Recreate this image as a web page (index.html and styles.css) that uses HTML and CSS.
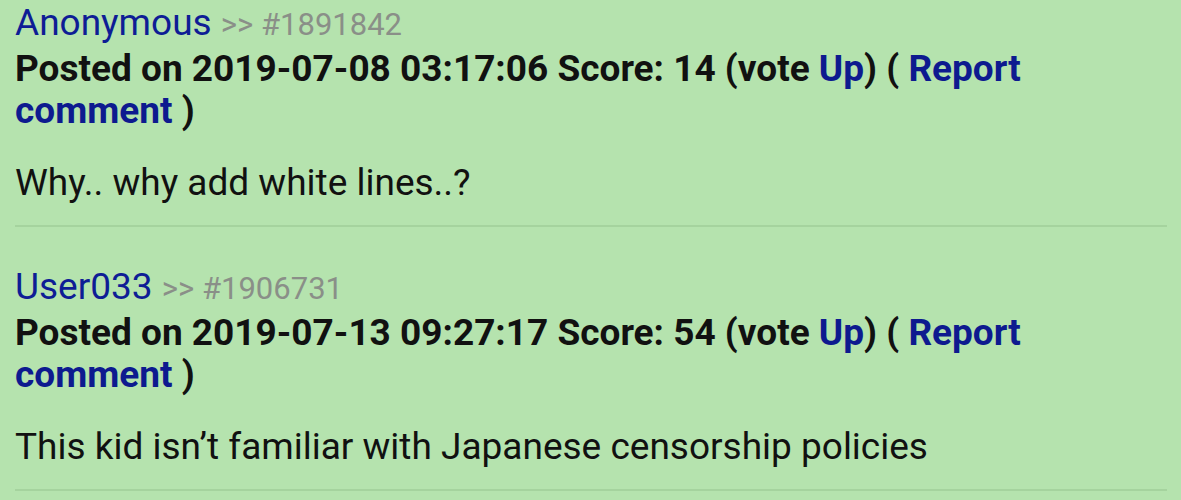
FILE: index.html
```html
<!DOCTYPE html>
<html>
<head>
  <title>Comments</title>
  <meta charset="utf-8">
  <meta name="viewport" content="width=device-width, initial-scale=1.0">
  <link rel="stylesheet" href="styles.css">
</head>
<body>
  <div class="comments">
    <div class="comment">
      <div class="comment-head">
        <a class="author" href="#">Anonymous</a>
        <span class="ref">&gt;&gt; #1891842</span>
      </div>
      <div class="meta">
        Posted on 2019-07-08 03:17:06 Score: 14 (vote <a href="#">Up</a>) ( <a href="#">Report comment</a> )
      </div>
      <div class="body">Why.. why add white lines..?</div>
    </div>
    <div class="comment">
      <div class="comment-head">
        <a class="author" href="#">User033</a>
        <span class="ref">&gt;&gt; #1906731</span>
      </div>
      <div class="meta">
        Posted on 2019-07-13 09:27:17 Score: 54 (vote <a href="#">Up</a>) ( <a href="#">Report comment</a> )
      </div>
      <div class="body">This kid isn’t familiar with Japanese censorship policies</div>
    </div>
  </div>
</body>
</html>
```

FILE: styles.css
```css
body { margin: 0; padding: 0; background: #b5e3ae; font-family: Roboto, "Noto Sans", sans-serif; color: #111; overflow: hidden; }
a { color: #0d1a8f; text-decoration: none; }
.comments { padding: 2px 14px 0 15px; }
.comment { border-bottom: 2px solid #a5d39e; padding-bottom: 21px; margin-bottom: 39px; }
.comment:last-child { margin-bottom: 0; }
.comment-head { font-size: 37px; line-height: 42px; }
.comment-head .author { color: #0e1d95; }
.comment-head .ref { font-size: 31px; color: #8a8f88; }
.meta { font-size: 37px; font-weight: bold; line-height: 42px; margin-top: 2px; }
.meta a { color: #0d1a8f; }
.body { font-size: 37px; line-height: 42px; margin-top: 30px; }
```
